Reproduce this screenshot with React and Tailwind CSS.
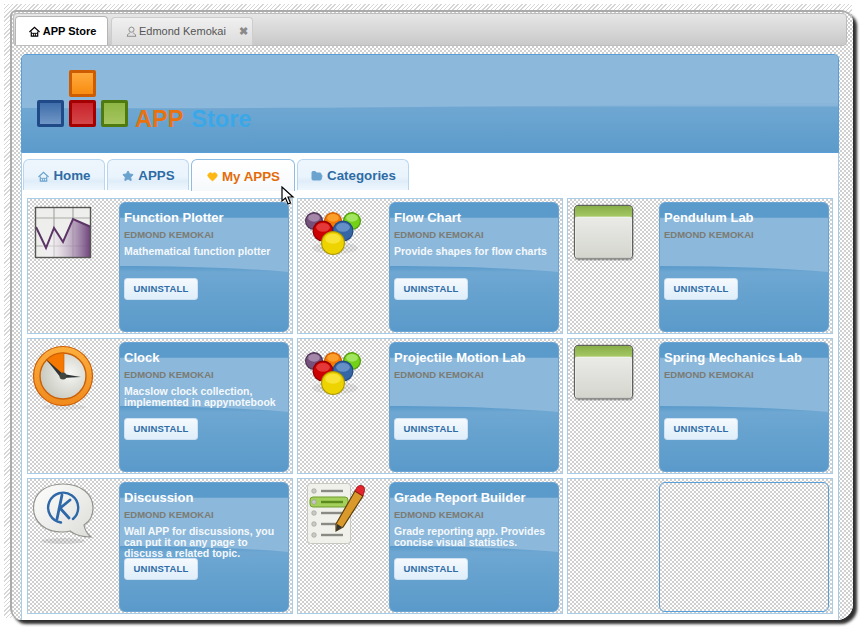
import { Star, Heart, FolderOpen } from "lucide-react"

const checker = "bg-[repeating-conic-gradient(#cfcfcf_0%_25%,#ffffff_0%_50%)] bg-[length:4px_4px]"

function HomeIcon({ className }) {
    return (
        <svg viewBox="0 0 12 12" className={className} fill="none" stroke="currentColor" strokeWidth="1.3">
            <path d="M0.5 6.5 L6 1.5 L11.5 6.5" />
            <path d="M2.5 6 V11 H9.5 V6" />
            <path d="M2.8 8 H9.2 M5 11 V8 M7 11 V8" strokeWidth="1" />
        </svg>
    )
}

function UserIcon({ className }) {
    return (
        <svg viewBox="0 0 12 12" className={className} fill="none" stroke="currentColor" strokeWidth="1">
            <circle cx="6" cy="4" r="2.8" />
            <path d="M1.5 11 C1.5 8.5 3.5 8 4.5 7.5 M10.5 11 C10.5 8.5 8.5 8 7.5 7.5 M1 11.2 H11" />
        </svg>
    )
}

function PlotterIcon() {
    return (
        <svg viewBox="0 0 64 64" className="h-16 w-16">
            <defs>
                <linearGradient id="plotFill" x1="0" x2="1" y1="0" y2="0">
                    <stop offset="0.3" stopColor="#f2eef3" stopOpacity="0.5" />
                    <stop offset="1" stopColor="#6a3f78" />
                </linearGradient>
            </defs>
            <rect x="4.5" y="5.5" width="55" height="50" fill="#eeeeec" stroke="#555753" />
            <path d="M23 6 V55 M42 6 V55 M5 16 H59 M5 44 H59" stroke="#a9a9a4" strokeWidth="1.2" />
            <path d="M5 25 L15 46 L23 26 L32 40 L42 17 L60 25 V55 H15 Z" fill="url(#plotFill)" />
            <path d="M5 25 L15 46 L23 26 L32 40 L42 17 L60 25" fill="none" stroke="#5c3566" strokeWidth="2" />
            <rect x="4.5" y="5.5" width="55" height="50" fill="none" stroke="#555753" strokeWidth="1.4" />
        </svg>
    )
}

function BallsIcon() {
    const balls = [
        [13, 19, 9, "#75507b", "#b9a0bd", "#4d3353"],
        [51, 19, 9, "#73d216", "#b8ec84", "#4e9a06"],
        [32, 19, 9, "#f57900", "#fcaf3e", "#ce5c00"],
        [22, 29, 10.5, "#cc0000", "#ef5050", "#8f0000"],
        [42, 29, 10.5, "#3465a4", "#7ba3d6", "#204a87"],
        [32, 41, 12, "#edd400", "#fce94f", "#b09a00"],
    ]
    return (
        <svg viewBox="0 0 64 64" className="h-16 w-16">
            <ellipse cx="34" cy="46" rx="23" ry="6" fill="#000" opacity="0.07" />
            {balls.map(([cx, cy, r, fill, light, edge]) => (
                <g key={fill}>
                    <circle cx={cx} cy={cy} r={r} fill={edge} />
                    <circle cx={cx} cy={cy} r={r - 1.2} fill={fill} />
                    <ellipse cx={cx} cy={cy - r * 0.35} rx={r * 0.65} ry={r * 0.42} fill={light} opacity="0.7" />
                </g>
            ))}
        </svg>
    )
}

function WindowIcon() {
    return (
        <svg viewBox="0 0 64 64" className="h-16 w-16">
            <defs>
                <linearGradient id="winBody" x1="0" x2="0" y1="0" y2="1">
                    <stop offset="0" stopColor="#f1f1ef" />
                    <stop offset="1" stopColor="#d3d5cd" />
                </linearGradient>
                <linearGradient id="winHead" x1="0" x2="0" y1="0" y2="1">
                    <stop offset="0" stopColor="#88ae48" />
                    <stop offset="1" stopColor="#a6c965" />
                </linearGradient>
            </defs>
            <rect x="3.5" y="4.5" width="59" height="54" rx="4" fill="#000" opacity="0.25" />
            <rect x="3.5" y="3.5" width="58" height="53" rx="4" fill="url(#winBody)" stroke="#5f615b" strokeWidth="1.3" />
            <path d="M4 15 V7.5 Q4 4 7.5 4 H57.5 Q61 4 61 7.5 V15 Z" fill="url(#winHead)" />
            <rect x="4.5" y="15" width="56" height="41" rx="2" fill="none" stroke="#fff" opacity="0.6" />
        </svg>
    )
}

function ClockIcon() {
    return (
        <svg viewBox="0 -3 64 70" className="h-[70px] w-16">
            <defs>
                <radialGradient id="clockFace" cx="0.65" cy="0.45" r="0.7">
                    <stop offset="0" stopColor="#f6f6f4" />
                    <stop offset="1" stopColor="#c4c5ba" />
                </radialGradient>
                <linearGradient id="clockRing" x1="0" x2="0" y1="0" y2="1">
                    <stop offset="0" stopColor="#fcaf3e" />
                    <stop offset="1" stopColor="#f08a1d" />
                </linearGradient>
            </defs>
            <ellipse cx="33" cy="62" rx="22" ry="3" fill="#000" opacity="0.07" />
            <circle cx="32" cy="31" r="29.5" fill="url(#clockRing)" stroke="#ce5c00" strokeWidth="1.2" />
            <circle cx="32" cy="31" r="23" fill="url(#clockFace)" stroke="#c9600a" strokeWidth="1.4" />
            <path d="M33 31 L33 8 Q22 8 15.5 15.5 Z" fill="#f57900" stroke="#ce5c00" strokeWidth="0.6" />
            <path d="M33 30 L15 14 L30 33 Z" fill="#2e3436" />
            <path d="M32 29 L50 32 L32 33 Z" fill="#2e3436" />
            <circle cx="32" cy="31" r="3.5" fill="#41463f" />
        </svg>
    )
}

function DiscussionIcon() {
    return (
        <svg viewBox="0 0 66 70" className="h-[70px] w-[66px]">
            <defs>
                <linearGradient id="bubble" x1="0" x2="1" y1="0" y2="1">
                    <stop offset="0" stopColor="#ffffff" />
                    <stop offset="1" stopColor="#dcdcd8" />
                </linearGradient>
            </defs>
            <ellipse cx="32" cy="59" rx="22" ry="3" fill="#000" opacity="0.1" />
            <path
                d="M2.5 26 C2.5 11 15 2 32 2 C50 2 62 12 62 26 C62 34 58 40 53 43 C54 48 56 52 60 55 C52 55 44 53 39 49 C36 50 34 50 31 50 C14 50 2.5 40 2.5 26 Z"
                fill="url(#bubble)"
                stroke="#94948e"
                strokeWidth="1.2"
            />
            <path d="M42 37 A15 15 0 1 0 30 40.5" fill="none" stroke="#2f68a8" strokeWidth="2.4" strokeLinecap="round" />
            <path d="M31 13 L26 37 M28 27 L39 18 M29 26 L38 36" fill="none" stroke="#2f68a8" strokeWidth="2.8" strokeLinecap="round" />
        </svg>
    )
}

function GradeIcon() {
    const rows = [9, 20, 31, 42, 53]
    return (
        <svg viewBox="0 0 64 64" className="h-16 w-16">
            <rect x="6.5" y="1.5" width="43" height="60" rx="3" fill="#f1f1ec" stroke="#c8c8c0" />
            <rect x="9" y="15" width="38" height="10" rx="3" fill="#a4d05c" stroke="#6f9c2c" />
            {rows.map((y) => (
                <g key={y}>
                    <circle cx="13" cy={y} r="2.3" fill="#c9c9c3" stroke="#9a9a94" strokeWidth="0.6" />
                    <rect x="20" y={y - 1.2} width="22" height="2.4" fill={y === 20 ? "#5c8a1e" : "#8a8a84"} />
                </g>
            ))}
            <path d="M35 42 L54 9 L62 14 L42 45 L35 49 Z" fill="#d99a2b" stroke="#5d3f0e" strokeWidth="1.2" />
            <path d="M35 49 L36 42 L41 45 Z" fill="#2e3436" />
            <path d="M54 9 L56 5 Q59 2 62 4 Q64.5 6 63.5 9 L62 14 Z" fill="#e2242c" stroke="#8f0000" strokeWidth="0.6" />
        </svg>
    )
}

const apps = [
    { title: "Function Plotter", desc: "Mathematical function plotter", icon: <PlotterIcon /> },
    { title: "Flow Chart", desc: "Provide shapes for flow charts", icon: <BallsIcon /> },
    { title: "Pendulum Lab", desc: "", icon: <WindowIcon /> },
    { title: "Clock", desc: "Macslow clock collection, implemented in appynotebook", icon: <ClockIcon /> },
    { title: "Projectile Motion Lab", desc: "", icon: <BallsIcon /> },
    { title: "Spring Mechanics Lab", desc: "", icon: <WindowIcon /> },
    { title: "Discussion", desc: "Wall APP for discussions, you can put it on any page to discuss a related topic.", icon: <DiscussionIcon /> },
    { title: "Grade Report Builder", desc: "Grade reporting app. Provides concise visual statistics.", icon: <GradeIcon /> },
]

function AppCell({ app }) {
    return (
        <div className={`flex h-[136px] border border-[#a8cde8] pt-[3px] ${checker}`}>
            <div className="w-[91px] shrink-0 pl-[3px]">{app?.icon}</div>
            {app ? (
                <div className="relative h-[130px] w-[170px] overflow-hidden rounded-[6px] border border-[#6ba5d6] bg-[linear-gradient(to_bottom,#5b9bcb_0%,#5b9bcb_50%,#6ea7d2_54%,#5a9aca_100%)] px-[4px] pt-[7px]">
                    <svg viewBox="0 0 170 130" preserveAspectRatio="none" className="absolute top-0 left-0 h-full w-full">
                        <path d="M0 15 H170 V70 C120 66 60 64 0 64 Z" fill="#8cb8db" />
                    </svg>
                    <div className="relative">
                        <div className="h-[16px] text-[13px] leading-[16px] font-bold text-white">{app.title}</div>
                        <div className="mt-[3px] h-[11px] text-[9.5px] leading-[11px] font-bold text-[#7b7b72]">EDMOND KEMOKAI</div>
                        <div className="mt-[6px] h-[32px] w-[160px] text-[10.5px] leading-[11px] font-bold text-[#f4f8fc]">{app.desc}</div>
                        <button className="flex h-[22px] w-[74px] items-center justify-center rounded-[3px] border border-[#cfe0f0] bg-[linear-gradient(to_bottom,#f4f9fd,#dfeefa)] pt-[1px] text-[9.5px] font-bold tracking-[0.2px] text-[#2e6ca5]">
                            UNINSTALL
                        </button>
                    </div>
                </div>
            ) : (
                <div className="h-[130px] w-[170px] rounded-[6px] border border-[#5a9fd8]" />
            )}
        </div>
    )
}

function NavTab({ icon, label, width, active }) {
    return (
        <div
            className={`flex items-center justify-center gap-[4px] rounded-t-[6px] border border-b-0 pt-[2px] pl-[1px] text-[13.33px] font-bold ${width} ${
                active
                    ? "h-[32px] -mb-[1px] border-[#8ebde4] bg-[linear-gradient(to_bottom,#ffffff,#f6f9fb)] text-[#e46c0a]"
                    : "h-[31px] border-[#b8d6ef] bg-[linear-gradient(to_bottom,#eef6fd_0%,#eaf4fc_55%,#dfedf9_70%,#eff7fe_100%)] text-[#2e6ca5]"
            }`}
        >
            {icon}
            {label}
        </div>
    )
}

export default function App() {
    return (
        <div className="relative h-[633px] w-[865px] overflow-hidden bg-white font-['Liberation_Sans',Arial,sans-serif]">
            <div className="mt-[4px] ml-[4px] h-[614px] w-[848px] bg-[repeating-linear-gradient(135deg,#d6d6d6_0px,#d6d6d6_1px,#ffffff_1px,#ffffff_3px)] pt-[6px] pl-[6px]">
                <div className={`h-[610px] w-[843px] overflow-hidden rounded-tl-[6px] rounded-tr-[12px] rounded-br-[16px] rounded-bl-[12px] border-t-2 border-l-2 border-[#ababab] pt-[1px] pl-[1px] shadow-[4px_4px_3px_#2f2f2f] ${checker}`}>
                    {/* top tabs */}
                    <div className="flex h-[33px] w-[834px] items-end gap-[3px] rounded-[4px] border border-[#bdbdbd] bg-[linear-gradient(to_bottom,#e6e6e6,#c9c9c9)] pl-[1px]">
                        <div className="flex h-[29px] w-[93px] items-center justify-center gap-[3px] rounded-t-[4px] border border-b-0 border-[#b5b5b5] bg-white pl-[2px] text-[11px] font-bold text-black">
                            <HomeIcon className="h-[11px] w-[11px]" />
                            APP Store
                        </div>
                        <div className="flex h-[28px] w-[142px] items-center rounded-t-[4px] border border-b-0 border-[#cdcdcd] bg-[linear-gradient(to_bottom,#f0f0f0,#dcdcdc)] pr-[4px] pl-[14px] text-[11px] text-[#555555]">
                            <UserIcon className="mr-[2px] h-[11px] w-[11px] text-[#888888]" />
                            Edmond Kemokai
                            <span className="ml-auto text-[11px] font-bold text-[#8a8a8a]">✖</span>
                        </div>
                    </div>

                    {/* main panel */}
                    <div className="mt-[8px] ml-[8px] flex h-[566px] w-[818px] flex-col">
                        <div className="relative flex h-[99px] shrink-0 items-end overflow-hidden rounded-t-[5px] border border-[#5a9fd8] bg-[linear-gradient(to_bottom,#8db9dc_0%,#88b5d9_52%,#6fa7d2_54%,#5c9bcb_100%)] pb-[25px] pl-[15px]">
                            <svg viewBox="0 0 818 99" preserveAspectRatio="none" className="absolute top-0 left-0 h-full w-full">
                                <path d="M0 0 H818 V49 C600 50 300 56 0 54 Z" fill="#8cb8db" />
                            </svg>
                            <div className="relative grid w-[91px] grid-cols-3 gap-x-[5px] gap-y-[3px]">
                                <div className="col-start-2 h-[27px] rounded-[2px] border-[3px] border-[#ce5c00] bg-[linear-gradient(to_bottom,#ffab3d,#f88c10)]" />
                                <div className="col-start-1 row-start-2 h-[27px] rounded-[2px] border-[3px] border-[#204a87] bg-[linear-gradient(to_bottom,#3f6eaa,#7096c6)]" />
                                <div className="col-start-2 row-start-2 h-[27px] rounded-[2px] border-[3px] border-[#a40000] bg-[linear-gradient(to_bottom,#c9232b,#d4474a)]" />
                                <div className="col-start-3 row-start-2 h-[27px] rounded-[2px] border-[3px] border-[#4e7a10] bg-[linear-gradient(to_bottom,#8eb744,#a6c560)]" />
                            </div>
                            <div className="relative -mb-[6px] ml-[7px] text-[23.5px] leading-[28px] font-bold">
                                <span className="text-[#e8720f]">APP</span>
                                <span className="ml-[8px] text-[#3aa8e8]">Store</span>
                            </div>
                        </div>

                        <div className="min-h-0 flex-1 border-x border-[#a8cde8] bg-white pl-[1px]">
                            <div className="flex h-[37px] items-end gap-[2px]">
                                <NavTab width="w-[82px]" label="Home" icon={<HomeIcon className="h-[11px] w-[11px] text-[#6ba3cf]" />} />
                                <NavTab width="w-[82px]" label="APPS" icon={<Star className="h-[12px] w-[12px] fill-[#6ba3cf] text-[#6ba3cf]" />} />
                                <NavTab width="w-[104px]" label="My APPS" active icon={<Heart className="h-[11px] w-[11px] fill-[#fdb813] text-[#fdb813]" />} />
                                <NavTab width="w-[112px]" label="Categories" icon={<FolderOpen className="h-[12px] w-[12px] fill-[#6ba3cf] text-[#6ba3cf]" />} />
                            </div>
                            <div className="mt-[8px] ml-[4px] grid w-[806px] grid-cols-[repeat(3,266px)] gap-[4px]">
                                {apps.map((app) => (
                                    <AppCell key={app.title} app={app} />
                                ))}
                                <AppCell />
                            </div>
                        </div>
                    </div>
                </div>
            </div>

            {/* mouse pointer */}
            <svg viewBox="0 0 14 20" className="absolute top-[186px] left-[281px] h-[20px] w-[14px]">
                <path d="M1 1 L1 15 L4.5 12 L7 18 L9.5 17 L7 11 L12 11 Z" fill="#fff" stroke="#000" strokeWidth="1.2" />
            </svg>
        </div>
    )
}
